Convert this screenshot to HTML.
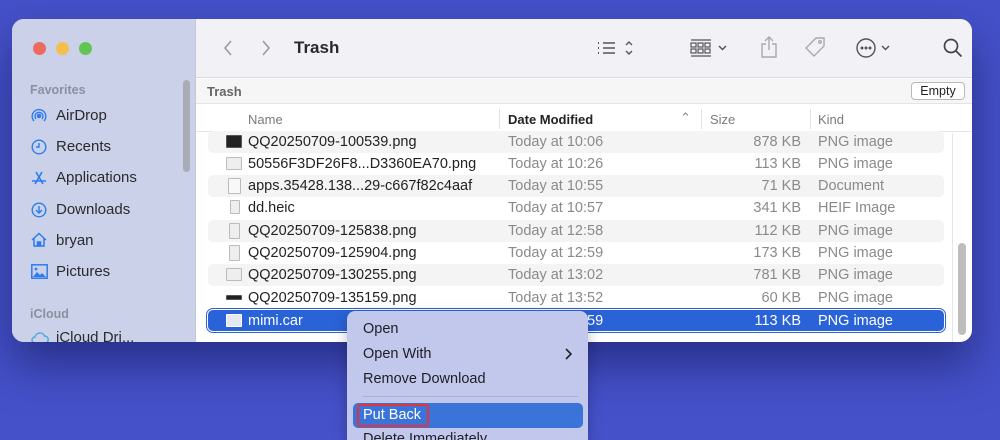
<!DOCTYPE html>
<html style="width:1000px;height:440px;overflow:hidden"><head><style>
*{margin:0;padding:0;box-sizing:border-box}
body{width:1000px;height:440px;overflow:hidden;background:#4551c9;font-family:"Liberation Sans",sans-serif;position:relative}
.win{position:absolute;left:12px;top:19px;width:960px;height:323px;border-radius:12px;background:#fff;overflow:hidden;box-shadow:0 22px 45px rgba(20,25,90,.6)}
.side{position:absolute;left:0;top:0;width:184px;height:323px;background:#cbd1e8;border-right:1px solid #c4c8d6}
.tl{position:absolute;top:23px;width:13px;height:13px;border-radius:50%}
.sh{position:absolute;left:18px;font-size:12.5px;color:#8b90a0;font-weight:bold}
.si{position:absolute;left:44px;font-size:15px;color:#2a2a2e}
.ic{position:absolute;left:19px}
.tool{position:absolute;left:184px;top:0;right:0;height:59px;background:#f1f1f6;border-bottom:1px solid #dcdce0}
.path{position:absolute;left:184px;top:60px;right:0;height:25px;background:#f6f6f6;border-bottom:1px solid #e4e4e4}
.hdr{position:absolute;left:184px;top:86px;right:0;height:27px;background:#fff;border-bottom:1px solid #e5e5e5;font-size:13px;color:#7a7a7a}
.hdr span{position:absolute;top:7px}
.row{position:absolute;left:196px;width:736px;height:22px;border-radius:5px;font-size:14.5px;color:#222}
.row.s{background:#f4f4f5}
.row span{position:absolute;top:3px;white-space:nowrap}
.row .d,.row .k{color:#8a8a8a}
.row .z{color:#8a8a8a;right:143px;text-align:right}
.row .n{left:40px}.row .d{left:300px}.row .k{left:610px}
.fi{position:absolute;left:18px;top:4px;width:16px;height:13px;border:1px solid #bbb;background:#eee;border-radius:1px}
.menu{position:absolute;left:347px;top:311px;width:241px;height:129px;background:#c2c8ec;border-radius:8px 8px 0 0;box-shadow:0 4px 14px rgba(0,0,0,.25);font-size:14.5px;color:#1e1e24;overflow:hidden}
.menu div.it{position:absolute;left:16px}
</style></head><body>
<div class="win">
 <div class="side">
  <div class="tl" style="left:21px;background:#ed6a5e"></div>
  <div class="tl" style="left:44px;background:#f5bf4f"></div>
  <div class="tl" style="left:67px;background:#61c554"></div>
  <div style="position:absolute;left:171px;top:61px;width:7px;height:92px;border-radius:4px;background:#a9acb6"></div>
  <div class="sh" style="top:64px">Favorites</div>
  <svg class="ic" style="top:89px" width="16" height="16" viewBox="0 0 16 16" fill="none" stroke="#2c7cf0" stroke-width="1.4"><circle cx="8" cy="8" r="1.6" fill="#2c7cf0"/><path d="M5 11a4 4 0 1 1 6 0M3 13a6.8 6.8 0 1 1 10 0"/></svg>
  <div class="si" style="top:88px">AirDrop</div>
  <svg class="ic" style="top:120px" width="16" height="16" viewBox="0 0 16 16" fill="none" stroke="#2c7cf0" stroke-width="1.4"><circle cx="8" cy="8" r="6.8"/><path d="M8 4v4H5"/></svg>
  <div class="si" style="top:119px">Recents</div>
  <svg class="ic" style="top:151px" width="16" height="16" viewBox="0 0 16 16" fill="none" stroke="#2c7cf0" stroke-width="1.6"><path d="M5 2l7 12M11 2L4 14M1 11h14"/></svg>
  <div class="si" style="top:150px">Applications</div>
  <svg class="ic" style="top:183px" width="16" height="16" viewBox="0 0 16 16" fill="none" stroke="#2c7cf0" stroke-width="1.4"><circle cx="8" cy="8" r="6.8"/><path d="M8 4v7M5 8l3 3 3-3"/></svg>
  <div class="si" style="top:182px">Downloads</div>
  <svg class="ic" style="top:213px" width="16" height="16" viewBox="0 0 16 16" fill="none" stroke="#2c7cf0" stroke-width="1.5"><path d="M1 8L8 1.5 15 8M3 6.5V14h10V6.5"/><rect x="6.5" y="10" width="3" height="4" fill="#2c7cf0"/></svg>
  <div class="si" style="top:213px">bryan</div>
  <svg class="ic" style="top:245px" width="17" height="15" viewBox="0 0 17 15"><rect x=".8" y=".8" width="15.4" height="13.4" fill="none" stroke="#2c7cf0" stroke-width="1.5"/><path d="M2 13l4-5 3 3 2-2 4 4z" fill="#2c7cf0"/><circle cx="5" cy="5" r="1.4" fill="#2c7cf0"/></svg>
  <div class="si" style="top:244px">Pictures</div>
  <div class="sh" style="top:288px">iCloud</div>
  <svg class="ic" style="top:312px" width="18" height="13" viewBox="0 0 18 13" fill="none" stroke="#4aa8d8" stroke-width="1.4"><path d="M4 12a3 3 0 0 1 0-6 5 5 0 0 1 9.5-1A3.5 3.5 0 0 1 14 12z"/></svg>
  <div class="si" style="top:310px">iCloud Dri...</div>
 </div>
 <div class="tool">
  <svg style="position:absolute;left:26px;top:20px" width="12" height="18" viewBox="0 0 12 18" fill="none" stroke="#9a9aa0" stroke-width="1.6"><path d="M9 2L3 9l6 7"/></svg>
  <svg style="position:absolute;left:64px;top:20px" width="12" height="18" viewBox="0 0 12 18" fill="none" stroke="#9a9aa0" stroke-width="1.6"><path d="M3 2l6 7-6 7"/></svg>
  <div style="position:absolute;left:98px;top:19px;font-size:17px;font-weight:bold;color:#2a2a2e">Trash</div>
  <svg style="position:absolute;left:400px;top:20px" width="42" height="18" viewBox="0 0 42 18" fill="none" stroke="#555" stroke-width="1.4"><path d="M7 4h12M7 9h12M7 14h12"/><path d="M2 4h1M2 9h1M2 14h1" stroke-width="2"/><path d="M30 6l3-3 3 3M30 12l3 3 3-3"/></svg>
  <svg style="position:absolute;left:494px;top:20px" width="42" height="18" viewBox="0 0 42 18" fill="none" stroke="#555" stroke-width="1.2"><path d="M1 1h20M1 17h20"/><rect x="1" y="4" width="5" height="4"/><rect x="8" y="4" width="5" height="4"/><rect x="15" y="4" width="5" height="4"/><rect x="1" y="10" width="5" height="4"/><rect x="8" y="10" width="5" height="4"/><rect x="15" y="10" width="5" height="4"/><path d="M29 7l3.5 3.5L36 7" stroke-width="1.5"/></svg>
  <svg style="position:absolute;left:564px;top:16px" width="18" height="24" viewBox="0 0 18 24" fill="none" stroke="#aaa" stroke-width="1.4"><path d="M6 9H2v13h14V9h-4M9 15V2M5 6l4-4 4 4"/></svg>
  <svg style="position:absolute;left:608px;top:17px" width="22" height="22" viewBox="0 0 22 22" fill="none" stroke="#aaa" stroke-width="1.4"><path d="M12 2h8v8L10 20 2 12z"/><circle cx="16" cy="6" r="1.3"/></svg>
  <svg style="position:absolute;left:660px;top:18px" width="40" height="22" viewBox="0 0 40 22" fill="none" stroke="#555" stroke-width="1.4"><circle cx="10" cy="11" r="9"/><circle cx="6" cy="11" r=".8" fill="#555"/><circle cx="10" cy="11" r=".8" fill="#555"/><circle cx="14" cy="11" r=".8" fill="#555"/><path d="M26 9l3.5 3.5L33 9" stroke-width="1.5"/></svg>
  <svg style="position:absolute;left:747px;top:19px" width="20" height="20" viewBox="0 0 20 20" fill="none" stroke="#444" stroke-width="1.7"><circle cx="8" cy="8" r="6.5"/><path d="M13 13l5.5 5.5"/></svg>
 </div>
 <div class="path">
  <div style="position:absolute;left:11px;top:5px;font-size:13px;font-weight:bold;color:#666">Trash</div>
  <div style="position:absolute;right:7px;top:3px;width:54px;height:18px;border:1px solid #b8b8b8;border-radius:4px;background:#fff;font-size:12.5px;text-align:center;line-height:16px;color:#222">Empty</div>
 </div>
 <div class="hdr">
  <span style="left:52px">Name</span>
  <div style="position:absolute;left:303px;top:4px;width:1px;height:20px;background:#e2e2e2"></div>
  <span style="left:312px;color:#222;font-weight:bold">Date Modified</span>
  <span style="left:484px;top:5px;color:#888">&#8963;</span>
  <div style="position:absolute;left:505px;top:4px;width:1px;height:20px;background:#e2e2e2"></div>
  <span style="left:514px">Size</span>
  <div style="position:absolute;left:614px;top:4px;width:1px;height:20px;background:#e2e2e2"></div>
  <span style="left:622px">Kind</span>
 </div>
 <div style="position:absolute;left:946px;top:224px;width:8px;height:92px;border-radius:4px;background:#bdbdbd"></div>
 <div style="position:absolute;left:940px;top:114px;width:1px;height:209px;background:#e6e6e6"></div>

 <div class="row s" style="top:112px"><div class="fi" style="background:#222;border-color:#555"></div><span class="n">QQ20250709-100539.png</span><span class="d">Today at 10:06</span><span class="z">878 KB</span><span class="k">PNG image</span></div>
 <div class="row" style="top:134px"><div class="fi"></div><span class="n">50556F3DF26F8...D3360EA70.png</span><span class="d">Today at 10:26</span><span class="z">113 KB</span><span class="k">PNG image</span></div>
 <div class="row s" style="top:156px"><div class="fi" style="width:13px;height:16px;top:3px;left:20px;background:#f8f8f8"></div><span class="n">apps.35428.138...29-c667f82c4aaf</span><span class="d">Today at 10:55</span><span class="z">71 KB</span><span class="k">Document</span></div>
 <div class="row" style="top:178px"><div class="fi" style="width:10px;height:14px;left:22px;top:3px"></div><span class="n">dd.heic</span><span class="d">Today at 10:57</span><span class="z">341 KB</span><span class="k">HEIF Image</span></div>
 <div class="row s" style="top:201px"><div class="fi" style="width:11px;height:16px;left:21px;top:3px"></div><span class="n">QQ20250709-125838.png</span><span class="d">Today at 12:58</span><span class="z">112 KB</span><span class="k">PNG image</span></div>
 <div class="row" style="top:223px"><div class="fi" style="width:11px;height:16px;left:21px;top:3px"></div><span class="n">QQ20250709-125904.png</span><span class="d">Today at 12:59</span><span class="z">173 KB</span><span class="k">PNG image</span></div>
 <div class="row s" style="top:245px"><div class="fi"></div><span class="n">QQ20250709-130255.png</span><span class="d">Today at 13:02</span><span class="z">781 KB</span><span class="k">PNG image</span></div>
 <div class="row" style="top:268px"><div class="fi" style="height:5px;top:8px;background:#222;border-color:#555"></div><span class="n">QQ20250709-135159.png</span><span class="d">Today at 13:52</span><span class="z">60 KB</span><span class="k">PNG image</span></div>
 <div class="row" style="top:291px;height:21px;background:#2a62d8;box-shadow:0 0 0 1px #fff,0 0 0 2px #2a62d8;color:#fff"><div class="fi" style="background:#e4e8f0;border-color:#fff"></div><span class="n" style="color:#fff">mimi.car</span><span class="d" style="color:#fff">Today at 10:59</span><span class="z" style="color:#fff">113 KB</span><span class="k" style="color:#fff">PNG image</span></div>
</div>

<div class="menu">
 <div class="it" style="top:10px">Open</div>
 <div class="it" style="top:35px">Open With</div>
 <svg style="position:absolute;left:217px;top:37px" width="8" height="12" viewBox="0 0 8 12" fill="none" stroke="#222" stroke-width="1.6"><path d="M2 1l5 5-5 5"/></svg>
 <div class="it" style="top:60px">Remove Download</div>
 <div style="position:absolute;left:16px;right:10px;top:85px;height:1px;background:#a9b0d4"></div>
 <div style="position:absolute;left:6px;width:230px;top:92px;height:25px;border-radius:5px;background:#3a74d9"></div>
 <div style="position:absolute;left:10px;top:93px;width:72px;height:23px;border:2.5px solid #e8323a;border-radius:3px"></div>
 <div class="it" style="top:96px;color:#fff">Put Back</div>
 <div class="it" style="top:120px">Delete Immediately</div>
</div>
</body></html>
